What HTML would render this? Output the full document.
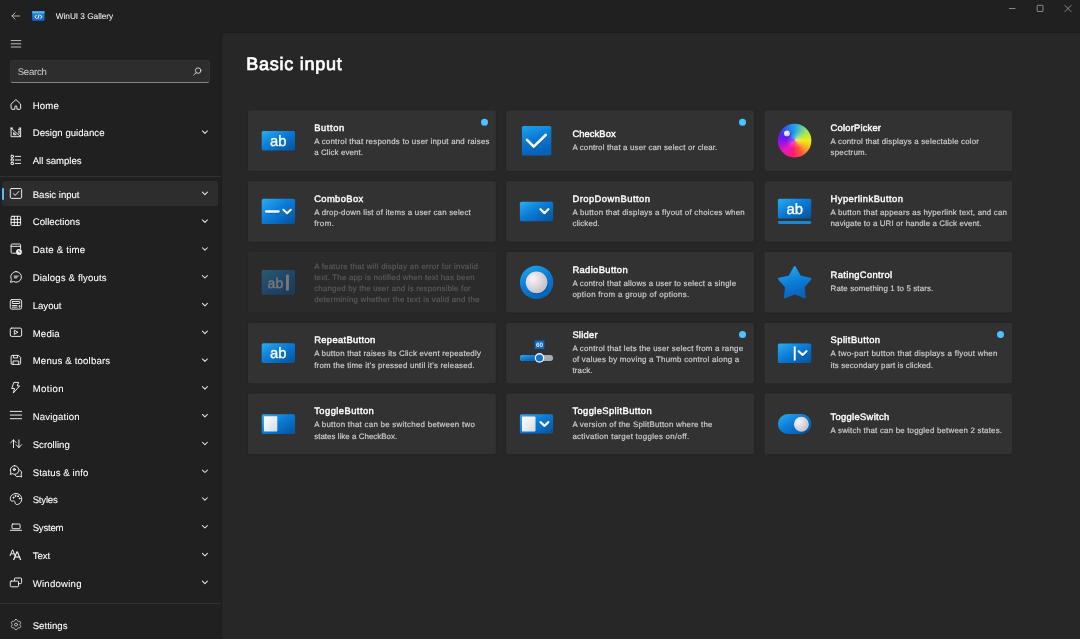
<!DOCTYPE html>
<html lang="en"><head><meta charset="utf-8"><title>WinUI 3 Gallery</title>
<style>
*{box-sizing:border-box;margin:0;padding:0}
html,body{width:1080px;height:639px;overflow:hidden;background:#202020}
body{font-family:"Liberation Sans",sans-serif;color:#fff}
#app{position:absolute;left:0;top:0;width:1080px;height:639px;overflow:hidden;background:#202020;will-change:transform;text-rendering:geometricPrecision}
.abs{position:absolute}
#content{position:absolute;left:221px;top:32px;width:870px;height:620px;background:#272727;border-radius:5px 0 0 0;border:1px solid #1c1c1c}
#apptitle{position:absolute;left:55.8px;top:10.00px;height:12px;line-height:12px;font-size:8.3px;white-space:nowrap;color:#fff}
#search{position:absolute;left:10px;top:60px;width:200px;height:23px;background:#2d2d2d;border-radius:3px;border:1px solid #323232;border-bottom:1px solid #848484}
#stext{position:absolute;left:6.7px;top:5.00px;height:14px;line-height:14px;font-size:9.6px;color:#cfcfcf;white-space:nowrap}
.sep{position:absolute;left:0;width:221px;height:1px;background:#313131}
#sel{position:absolute;left:2px;top:181px;width:216px;height:25px;border-radius:3px;background:#2d2d2d}
#selbar{position:absolute;left:2px;top:188px;width:2.4px;height:12px;border-radius:1px;background:#4cc2ff}
.nav{position:absolute;left:32.7px;height:14px;line-height:14px;font-size:9.6px;white-space:nowrap;color:#fff;-webkit-text-stroke:0.08px #fff}
.nico{position:absolute;left:9px;width:14px;height:14px}
.chev{position:absolute;left:200.2px;width:8px;height:8px}
#h1{position:absolute;left:246.2px;top:50.00px;height:28px;line-height:28px;font-size:18.0px;-webkit-text-stroke:0.7px #fff;white-space:nowrap;color:#fff}
#cardbg,#icons{position:absolute;left:0;top:0;width:1080px;height:639px}
.card{position:absolute;width:248px;height:61px}
.ct{position:absolute;left:66.3px;height:13px;line-height:13px;font-size:9.4px;-webkit-text-stroke:0.4px #fff;white-space:nowrap;color:#fff}
.cd{position:absolute;left:66.3px;height:11px;line-height:11px;font-size:7.9px;white-space:nowrap;color:#d2d2d2;-webkit-text-stroke:0.15px #d2d2d2}
.dis .cd{color:#5b5b5b;-webkit-text-stroke:0.15px #5b5b5b}
.dis .ct{color:#5b5b5b;-webkit-text-stroke:0.4px #5b5b5b}
.clip{position:absolute;left:0;top:6px;width:248px;height:6px;overflow:hidden}
.dot{position:absolute;left:233px;top:8.4px;width:7px;height:7px;border-radius:50%;background:#4cc2ff}
.wheel{position:absolute;left:13.8px;top:13.5px;width:33.6px;height:33.6px;border-radius:50%;background:radial-gradient(circle at 50% 50%,rgba(255,255,255,.28) 0,rgba(255,255,255,0) 45%),conic-gradient(from 0deg,#1ea6ea 0deg,#5fc8b0 30deg,#a8e458 55deg,#ecf018 90deg,#fda626 125deg,#fc5a3c 150deg,#fb1f6c 185deg,#e81ac0 225deg,#9a12e6 262deg,#5a1ef0 290deg,#2f62ee 325deg,#1ea6ea 360deg)}
.wknob{position:absolute;left:20px;top:20.3px;width:6px;height:6px;border-radius:50%;background:radial-gradient(circle at 35% 35%,#fbf8fb,#c4c0c8);box-shadow:0.6px 0.8px 1.2px rgba(20,0,90,.45)}
.cico{position:absolute;left:0;top:0;width:62px;height:60.5px;overflow:visible}
</style></head>
<body><div id="app">
<!-- title bar -->
<svg class="abs" style="left:10px;top:10px;width:12px;height:12px" viewBox="0 0 12 12" fill="none" stroke="#c4c4c4" stroke-width="0.85" stroke-linecap="round" stroke-linejoin="round"><path d="M9.6 6 H2 M5.1 2.8 L1.9 6 L5.1 9.2"/></svg>
<svg class="abs" style="left:32.2px;top:11px;width:13px;height:10px" viewBox="0 0 13 10"><defs><linearGradient id="lg0" x1="0" y1="0" x2="0" y2="1"><stop offset="0" stop-color="#2b8de0"/><stop offset="1" stop-color="#1565c8"/></linearGradient></defs><rect x="0.2" y="0.3" width="12.3" height="9.4" rx="0.7" fill="url(#lg0)"/><rect x="0.2" y="0.3" width="12.3" height="1.9" fill="#52b7f2"/><path d="M4.5 4 L2.9 5.8 L4.5 7.6 M8.3 4 L9.9 5.8 L8.3 7.6 M7.1 3.6 L5.8 8" stroke="#fff" stroke-width="0.95" fill="none"/></svg>
<div id="apptitle"><span style="letter-spacing:-0.053px">WinUI 3 Gallery</span></div>
<svg class="abs" style="left:1006px;top:2px;width:70px;height:13px" viewBox="0 0 70 13" fill="none" stroke="#b4b4b4" stroke-width="0.7"><path d="M3 6.5 H9.5"/><rect x="31.2" y="3.3" width="5.8" height="6.2" rx="0.5"/><path d="M58.7 3.2 L65.3 9.8 M65.3 3.2 L58.7 9.8"/></svg>
<!-- hamburger -->
<svg class="abs" style="left:10px;top:38px;width:12px;height:12px" viewBox="0 0 12 12" fill="none" stroke="#e6e6e6" stroke-width="0.8" stroke-linecap="round"><path d="M1.2 2.6 H10.8 M1.2 5.8 H10.8 M1.2 9 H10.8"/></svg>
<!-- search -->
<div id="search"><div id="stext"><span style="letter-spacing:-0.268px">Search</span></div>
<svg class="abs" style="left:181px;top:5px;width:11px;height:11px" viewBox="0 0 11 11" fill="none" stroke="#d4d4d4" stroke-width="0.95" stroke-linecap="round"><circle cx="6.15" cy="4.6" r="2.75"/><path d="M4.2 6.6 L1.9 8.8"/></svg>
</div>
<div class="sep" style="top:176px"></div>
<div class="sep" style="top:603px"></div>
<div id="sel"></div><div id="selbar"></div>
<div class="nav" style="top:100.00px"><span style="letter-spacing:0.189px">Home</span></div>
<div class="nav" style="top:127.00px"><span style="letter-spacing:0.024px">Design guidance</span></div>
<div class="nav" style="top:155.00px"><span style="letter-spacing:-0.019px">All samples</span></div>
<div class="nav" style="top:189.00px"><span style="letter-spacing:-0.008px">Basic input</span></div>
<div class="nav" style="top:216.00px"><span style="letter-spacing:0.038px">Collections</span></div>
<div class="nav" style="top:244.00px"><span style="letter-spacing:0.225px">Date &amp; time</span></div>
<div class="nav" style="top:272.00px"><span style="letter-spacing:0.156px">Dialogs &amp; flyouts</span></div>
<div class="nav" style="top:300.00px"><span style="letter-spacing:0.006px">Layout</span></div>
<div class="nav" style="top:328.00px"><span style="letter-spacing:0.192px">Media</span></div>
<div class="nav" style="top:355.00px"><span style="letter-spacing:0.184px">Menus &amp; toolbars</span></div>
<div class="nav" style="top:383.00px"><span style="letter-spacing:0.426px">Motion</span></div>
<div class="nav" style="top:411.00px"><span style="letter-spacing:0.176px">Navigation</span></div>
<div class="nav" style="top:439.00px"><span style="letter-spacing:0.034px">Scrolling</span></div>
<div class="nav" style="top:467.00px"><span style="letter-spacing:0.111px">Status &amp; info</span></div>
<div class="nav" style="top:494.00px"><span style="letter-spacing:-0.215px">Styles</span></div>
<div class="nav" style="top:522.00px"><span style="letter-spacing:-0.233px">System</span></div>
<div class="nav" style="top:550.00px"><span style="letter-spacing:-0.065px">Text</span></div>
<div class="nav" style="top:578.00px"><span style="letter-spacing:0.240px">Windowing</span></div>
<div class="nav" style="top:620.00px"><span style="letter-spacing:0.022px">Settings</span></div>
<!-- content -->
<div id="content"></div>
<div id="h1"><span style="letter-spacing:0.749px">Basic input</span></div>
<svg id="cardbg" viewBox="0 0 1080 639"><rect x="247.4" y="109.8" width="249.0" height="61.7" rx="2.8" fill="#323232" stroke="#242424" stroke-width="1"/><rect x="505.6" y="109.8" width="249.0" height="61.7" rx="2.8" fill="#323232" stroke="#242424" stroke-width="1"/><rect x="763.8" y="109.8" width="249.0" height="61.7" rx="2.8" fill="#323232" stroke="#242424" stroke-width="1"/><rect x="247.4" y="180.6" width="249.0" height="61.7" rx="2.8" fill="#323232" stroke="#242424" stroke-width="1"/><rect x="505.6" y="180.6" width="249.0" height="61.7" rx="2.8" fill="#323232" stroke="#242424" stroke-width="1"/><rect x="763.8" y="180.6" width="249.0" height="61.7" rx="2.8" fill="#323232" stroke="#242424" stroke-width="1"/><rect x="247.4" y="251.4" width="249.0" height="61.7" rx="2.8" fill="#2b2b2b" stroke="#262626" stroke-width="1"/><rect x="505.6" y="251.4" width="249.0" height="61.7" rx="2.8" fill="#323232" stroke="#242424" stroke-width="1"/><rect x="763.8" y="251.4" width="249.0" height="61.7" rx="2.8" fill="#323232" stroke="#242424" stroke-width="1"/><rect x="247.4" y="322.2" width="249.0" height="61.7" rx="2.8" fill="#323232" stroke="#242424" stroke-width="1"/><rect x="505.6" y="322.2" width="249.0" height="61.7" rx="2.8" fill="#323232" stroke="#242424" stroke-width="1"/><rect x="763.8" y="322.2" width="249.0" height="61.7" rx="2.8" fill="#323232" stroke="#242424" stroke-width="1"/><rect x="247.4" y="393.0" width="249.0" height="61.7" rx="2.8" fill="#323232" stroke="#242424" stroke-width="1"/><rect x="505.6" y="393.0" width="249.0" height="61.7" rx="2.8" fill="#323232" stroke="#242424" stroke-width="1"/><rect x="763.8" y="393.0" width="249.0" height="61.7" rx="2.8" fill="#323232" stroke="#242424" stroke-width="1"/></svg>
<div class="card" style="left:247px;top:110px">
<div class="ct" style="left:67.20px;top:11px"><span style="letter-spacing:0.582px">Button</span></div>
<div class="cd" style="left:67.20px;top:26px"><span style="letter-spacing:0.222px">A control that responds to user input and raises</span></div>
<div class="cd" style="left:67.20px;top:37px"><span style="letter-spacing:0.105px">a Click event.</span></div>
</div>
<div class="card" style="left:506px;top:110px">
<div class="ct" style="left:66.40px;top:17px"><span style="letter-spacing:0.077px">CheckBox</span></div>
<div class="cd" style="left:66.40px;top:32px"><span style="letter-spacing:0.165px">A control that a user can select or clear.</span></div>
</div>
<div class="card" style="left:764px;top:110px">
<div class="ct" style="left:66.60px;top:11px"><span style="letter-spacing:0.195px">ColorPicker</span></div>
<div class="cd" style="left:66.60px;top:26px"><span style="letter-spacing:0.196px">A control that displays a selectable color</span></div>
<div class="cd" style="left:66.60px;top:37px"><span style="letter-spacing:0.216px">spectrum.</span></div>
</div>
<div class="card" style="left:247px;top:181px">
<div class="ct" style="left:67.20px;top:11px"><span style="letter-spacing:0.370px">ComboBox</span></div>
<div class="cd" style="left:67.20px;top:26px"><span style="letter-spacing:0.210px">A drop-down list of items a user can select</span></div>
<div class="cd" style="left:67.20px;top:37px"><span style="letter-spacing:0.423px">from.</span></div>
</div>
<div class="card" style="left:506px;top:181px">
<div class="ct" style="left:66.40px;top:11px"><span style="letter-spacing:0.478px">DropDownButton</span></div>
<div class="cd" style="left:66.40px;top:26px"><span style="letter-spacing:0.238px">A button that displays a flyout of choices when</span></div>
<div class="cd" style="left:66.40px;top:37px"><span style="letter-spacing:0.130px">clicked.</span></div>
</div>
<div class="card" style="left:764px;top:181px">
<div class="ct" style="left:66.60px;top:11px"><span style="letter-spacing:0.444px">HyperlinkButton</span></div>
<div class="cd" style="left:66.60px;top:26px"><span style="letter-spacing:0.206px">A button that appears as hyperlink text, and can</span></div>
<div class="cd" style="left:66.60px;top:37px"><span style="letter-spacing:0.130px">navigate to a URI or handle a Click event.</span></div>
</div>
<div class="card dis" style="left:247px;top:251px">
<div class="clip"><div class="ct" style="left:67.20px;top:-12px"><span>InputValidation</span></div></div>
<div class="cd" style="left:67.20px;top:10px"><span style="letter-spacing:0.234px">A feature that will display an error for invalid</span></div>
<div class="cd" style="left:67.20px;top:21px"><span style="letter-spacing:0.194px">text. The app is notified when text has been</span></div>
<div class="cd" style="left:67.20px;top:32px"><span style="letter-spacing:0.188px">changed by the user and is responsible for</span></div>
<div class="cd" style="left:67.20px;top:43px"><span style="letter-spacing:0.249px">determining whether the text is valid and the</span></div>
</div>
<div class="card" style="left:506px;top:251px">
<div class="ct" style="left:66.40px;top:12px"><span style="letter-spacing:0.363px">RadioButton</span></div>
<div class="cd" style="left:66.40px;top:27px"><span style="letter-spacing:0.183px">A control that allows a user to select a single</span></div>
<div class="cd" style="left:66.40px;top:38px"><span style="letter-spacing:0.325px">option from a group of options.</span></div>
</div>
<div class="card" style="left:764px;top:251px">
<div class="ct" style="left:66.60px;top:17px"><span style="letter-spacing:0.348px">RatingControl</span></div>
<div class="cd" style="left:66.60px;top:32px"><span style="letter-spacing:0.149px">Rate something 1 to 5 stars.</span></div>
</div>
<div class="card" style="left:247px;top:322px">
<div class="ct" style="left:67.20px;top:11px"><span style="letter-spacing:0.334px">RepeatButton</span></div>
<div class="cd" style="left:67.20px;top:26px"><span style="letter-spacing:0.200px">A button that raises its Click event repeatedly</span></div>
<div class="cd" style="left:67.20px;top:38px"><span style="letter-spacing:0.208px">from the time it's pressed until it's released.</span></div>
</div>
<div class="card" style="left:506px;top:322px">
<div class="ct" style="left:66.40px;top:6px"><span style="letter-spacing:0.230px">Slider</span></div>
<div class="cd" style="left:66.40px;top:21px"><span style="letter-spacing:0.206px">A control that lets the user select from a range</span></div>
<div class="cd" style="left:66.40px;top:32px"><span style="letter-spacing:0.237px">of values by moving a Thumb control along a</span></div>
<div class="cd" style="left:66.40px;top:43px"><span style="letter-spacing:0.176px">track.</span></div>
</div>
<div class="card" style="left:764px;top:322px">
<div class="ct" style="left:66.60px;top:11px"><span style="letter-spacing:0.410px">SplitButton</span></div>
<div class="cd" style="left:66.60px;top:26px"><span style="letter-spacing:0.282px">A two-part button that displays a flyout when</span></div>
<div class="cd" style="left:66.60px;top:38px"><span style="letter-spacing:0.131px">its secondary part is clicked.</span></div>
</div>
<div class="card" style="left:247px;top:393px">
<div class="ct" style="left:67.20px;top:11px"><span style="letter-spacing:0.447px">ToggleButton</span></div>
<div class="cd" style="left:67.20px;top:26px"><span style="letter-spacing:0.275px">A button that can be switched between two</span></div>
<div class="cd" style="left:67.20px;top:38px"><span style="letter-spacing:0.047px">states like a CheckBox.</span></div>
</div>
<div class="card" style="left:506px;top:393px">
<div class="ct" style="left:66.40px;top:11px"><span style="letter-spacing:0.390px">ToggleSplitButton</span></div>
<div class="cd" style="left:66.40px;top:26px"><span style="letter-spacing:0.230px">A version of the SplitButton where the</span></div>
<div class="cd" style="left:66.40px;top:38px"><span style="letter-spacing:0.296px">activation target toggles on/off.</span></div>
</div>
<div class="card" style="left:764px;top:393px">
<div class="ct" style="left:66.60px;top:17px"><span style="letter-spacing:0.300px">ToggleSwitch</span></div>
<div class="cd" style="left:66.60px;top:32px"><span style="letter-spacing:0.202px">A switch that can be toggled between 2 states.</span></div>
</div>
<svg id="icons" viewBox="0 0 1080 639"><g transform="translate(9 98.00)" fill="none" stroke="#fff" stroke-width="0.9" stroke-linecap="round" stroke-linejoin="round"><path d="M2.2 6 L6.9 1.6 L11.6 6 V10.6 a0.7 0.7 0 0 1 -0.7 0.7 H7.9 V8.8 a1 1 0 0 0 -2 0 V11.3 H2.9 a0.7 0.7 0 0 1 -0.7 -0.7 Z"/></g><g transform="translate(9 125.80)" fill="none" stroke="#fff" stroke-width="0.9" stroke-linecap="round" stroke-linejoin="round"><path d="M2.1 2.3 V10.9 H11.6 V2.3 M2.1 2.3 L11.6 10.9 M4.6 7 V9 H6.9 Z M9.4 3.6 h1.2 M9.4 5.4 h1.2 M9.4 7.2 h1.2" /><path d="M2.1 2.3 h1.5 M10.1 2.3 h1.5"/></g><path transform="translate(200.9 128.10)" d="M1.5 2.85 L4 5.3 L6.5 2.85" fill="none" stroke="#e4e4e4" stroke-width="1.05" stroke-linecap="round" stroke-linejoin="round"/><g transform="translate(9 153.60)" fill="none" stroke="#fff" stroke-width="0.9" stroke-linecap="round" stroke-linejoin="round"><rect x="2.1" y="1.75" width="2.4" height="2.1" rx="0.3"/><rect x="2.1" y="5.35" width="2.4" height="2.1" rx="0.3"/><rect x="2.1" y="8.8" width="2.4" height="2.1" rx="0.3"/><path d="M6.3 2.8 H11.6 M6.3 6.4 H11.6 M6.3 9.85 H11.6"/></g><g transform="translate(9 187.00)" fill="none" stroke="#fff" stroke-width="0.9" stroke-linecap="round" stroke-linejoin="round"><rect x="1.3" y="1.5" width="11.3" height="9.9" rx="1.2"/><path d="M4.3 6.6 L6.1 8.4 L9.9 4.4"/></g><path transform="translate(200.9 189.30)" d="M1.5 2.85 L4 5.3 L6.5 2.85" fill="none" stroke="#e4e4e4" stroke-width="1.05" stroke-linecap="round" stroke-linejoin="round"/><g transform="translate(9 214.80)" fill="none" stroke="#fff" stroke-width="0.9" stroke-linecap="round" stroke-linejoin="round"><rect x="2.1" y="1.5" width="9.5" height="9.2" rx="1"/><path d="M5.3 1.5 V10.7 M8.4 1.5 V10.7 M2.1 4.6 H11.6 M2.1 7.6 H11.6"/></g><path transform="translate(200.9 217.10)" d="M1.5 2.85 L4 5.3 L6.5 2.85" fill="none" stroke="#e4e4e4" stroke-width="1.05" stroke-linecap="round" stroke-linejoin="round"/><g transform="translate(9 242.60)" fill="none" stroke="#fff" stroke-width="0.9" stroke-linecap="round" stroke-linejoin="round"><path d="M7 10.6 H3.3 a1.2 1.2 0 0 1 -1.2 -1.2 V2.6 a1.2 1.2 0 0 1 1.2 -1.2 H10.4 a1.2 1.2 0 0 1 1.2 1.2 V6.2 M2.1 3.7 H11.6"/><circle cx="10" cy="9.3" r="2.85" fill="#fff" stroke="none"/><path d="M9.9 7.9 V9.5 H11.1" stroke="#202020" stroke-width="0.75"/></g><path transform="translate(200.9 244.90)" d="M1.5 2.85 L4 5.3 L6.5 2.85" fill="none" stroke="#e4e4e4" stroke-width="1.05" stroke-linecap="round" stroke-linejoin="round"/><g transform="translate(9 270.40)" fill="none" stroke="#fff" stroke-width="0.9" stroke-linecap="round" stroke-linejoin="round"><path transform="translate(0 0.4)" d="M7.1 0.8 a5.3 5.3 0 1 1 -2.6 9.9 L1.5 11.5 L2.4 8.6 A5.3 5.3 0 0 1 7.1 0.8 Z M5.2 5.3 H9.3 M5.2 7 H7.9"/></g><path transform="translate(200.9 272.70)" d="M1.5 2.85 L4 5.3 L6.5 2.85" fill="none" stroke="#e4e4e4" stroke-width="1.05" stroke-linecap="round" stroke-linejoin="round"/><g transform="translate(9 298.20)" fill="none" stroke="#fff" stroke-width="0.9" stroke-linecap="round" stroke-linejoin="round"><rect x="1.3" y="1.4" width="11.3" height="9.5" rx="1.5"/><rect x="3.3" y="3.3" width="7.4" height="2" rx="0.3"/><path d="M3.3 7.3 H8 M3.3 9 H8 M10.1 7.8 v1.2 h0.8 v-1.2z"/></g><path transform="translate(200.9 300.50)" d="M1.5 2.85 L4 5.3 L6.5 2.85" fill="none" stroke="#e4e4e4" stroke-width="1.05" stroke-linecap="round" stroke-linejoin="round"/><g transform="translate(9 326.00)" fill="none" stroke="#fff" stroke-width="0.9" stroke-linecap="round" stroke-linejoin="round"><rect x="1.3" y="2.1" width="11.3" height="8.3" rx="1.4"/><path d="M5.7 4.4 L9 6.25 L5.7 8.1 Z"/></g><path transform="translate(200.9 328.30)" d="M1.5 2.85 L4 5.3 L6.5 2.85" fill="none" stroke="#e4e4e4" stroke-width="1.05" stroke-linecap="round" stroke-linejoin="round"/><g transform="translate(9 353.80)" fill="none" stroke="#fff" stroke-width="0.9" stroke-linecap="round" stroke-linejoin="round"><path d="M2.1 2.6 a1 1 0 0 1 1 -1 H9.5 L11.6 3.7 V9.6 a1 1 0 0 1 -1 1 H3.1 a1 1 0 0 1 -1 -1 Z M4.4 1.6 V4.1 H8.6 V1.6 M4 10.6 V7.2 H9.7 V10.6"/></g><path transform="translate(200.9 356.10)" d="M1.5 2.85 L4 5.3 L6.5 2.85" fill="none" stroke="#e4e4e4" stroke-width="1.05" stroke-linecap="round" stroke-linejoin="round"/><g transform="translate(9 381.50)" fill="none" stroke="#fff" stroke-width="0.9" stroke-linecap="round" stroke-linejoin="round"><path d="M5.3 0.9 H9.6 L8.2 4.4 H10.7 L4.3 11.5 L5.6 7 H3.1 Z"/></g><path transform="translate(200.9 383.80)" d="M1.5 2.85 L4 5.3 L6.5 2.85" fill="none" stroke="#e4e4e4" stroke-width="1.05" stroke-linecap="round" stroke-linejoin="round"/><g transform="translate(9 409.30)" fill="none" stroke="#fff" stroke-width="0.9" stroke-linecap="round" stroke-linejoin="round"><path d="M1.3 2.1 H12.6 M1.3 5.75 H12.6 M1.3 9.4 H12.6"/></g><path transform="translate(200.9 411.60)" d="M1.5 2.85 L4 5.3 L6.5 2.85" fill="none" stroke="#e4e4e4" stroke-width="1.05" stroke-linecap="round" stroke-linejoin="round"/><g transform="translate(9 437.10)" fill="none" stroke="#fff" stroke-width="0.9" stroke-linecap="round" stroke-linejoin="round"><path d="M4.5 2.8 V10.5 M1.6 5.7 L4.5 2.8 L7.3 5.7 M9.9 2.8 V10.5 M7.1 7.6 L9.9 10.5 L12.6 7.6"/></g><path transform="translate(200.9 439.40)" d="M1.5 2.85 L4 5.3 L6.5 2.85" fill="none" stroke="#e4e4e4" stroke-width="1.05" stroke-linecap="round" stroke-linejoin="round"/><g transform="translate(9 464.90)" fill="none" stroke="#fff" stroke-width="0.9" stroke-linecap="round" stroke-linejoin="round"><path d="M5.6 0.8 a4.3 4.3 0 1 1 -2.2 8 L1.2 9.5 L1.9 7.2 A4.3 4.3 0 0 1 5.6 0.8 Z"/><path d="M10.75 4.9 A3.7 3.7 0 0 1 12.1 10 L12.7 12.1 L10.6 11.4 A3.7 3.7 0 0 1 5.7 9.95"/><circle cx="5.3" cy="4.6" r="1.1" fill="#fff" fill-opacity="0.55"/></g><path transform="translate(200.9 467.20)" d="M1.5 2.85 L4 5.3 L6.5 2.85" fill="none" stroke="#e4e4e4" stroke-width="1.05" stroke-linecap="round" stroke-linejoin="round"/><g transform="translate(9 492.60)" fill="none" stroke="#fff" stroke-width="0.9" stroke-linecap="round" stroke-linejoin="round"><path d="M7 0.9 C3.6 0.9 1.3 3.4 1.3 6.2 C1.3 8.1 2.6 8.9 3.9 8.5 C5.1 8.1 6 8.6 6 9.8 C6 11.3 7.1 12.2 8.5 11.9 C11 11.4 12.7 9.2 12.7 6.5 C12.7 3.3 10.2 0.9 7 0.9 Z"/><circle cx="4.4" cy="5.1" r="0.5" fill="#fff"/><circle cx="6.4" cy="3.3" r="0.5" fill="#fff"/><circle cx="9" cy="3.6" r="0.5" fill="#fff"/><circle cx="10.6" cy="5.8" r="0.5" fill="#fff"/></g><path transform="translate(200.9 494.90)" d="M1.5 2.85 L4 5.3 L6.5 2.85" fill="none" stroke="#e4e4e4" stroke-width="1.05" stroke-linecap="round" stroke-linejoin="round"/><g transform="translate(9 520.40)" fill="none" stroke="#fff" stroke-width="0.9" stroke-linecap="round" stroke-linejoin="round"><rect x="3" y="3.6" width="8.1" height="4.7" rx="0.8"/><path d="M1.3 9.9 H12.6"/></g><path transform="translate(200.9 522.70)" d="M1.5 2.85 L4 5.3 L6.5 2.85" fill="none" stroke="#e4e4e4" stroke-width="1.05" stroke-linecap="round" stroke-linejoin="round"/><g transform="translate(9 548.20)" fill="none" stroke="#fff" stroke-width="0.9" stroke-linecap="round" stroke-linejoin="round"><text x="0.6" y="7.5" font-family="Liberation Sans, sans-serif" font-size="9.2" fill="#fff" stroke="none">A</text><text x="4.0" y="12" font-family="Liberation Sans, sans-serif" font-size="12.4" fill="#fff" stroke="none">A</text></g><path transform="translate(200.9 550.50)" d="M1.5 2.85 L4 5.3 L6.5 2.85" fill="none" stroke="#e4e4e4" stroke-width="1.05" stroke-linecap="round" stroke-linejoin="round"/><g transform="translate(9 576.00)" fill="none" stroke="#fff" stroke-width="0.9" stroke-linecap="round" stroke-linejoin="round"><path d="M5.4 4.7 V3 a1 1 0 0 1 1 -1 H11.6 a1 1 0 0 1 1 1 V6.6 a1 1 0 0 1 -1 1 H9.9"/><rect x="1.3" y="5.1" width="8.2" height="5.7" rx="1"/></g><path transform="translate(200.9 578.30)" d="M1.5 2.85 L4 5.3 L6.5 2.85" fill="none" stroke="#e4e4e4" stroke-width="1.05" stroke-linecap="round" stroke-linejoin="round"/><g transform="translate(9 618.20)" fill="none" stroke="#d6d6d6" stroke-width="0.9" stroke-linecap="round" stroke-linejoin="round"><path d="M7.05 1.30 L7.49 1.32 L7.92 1.49 L8.23 2.01 L8.46 2.54 L8.74 2.77 L9.05 2.94 L9.34 3.12 L9.69 3.25 L10.27 3.18 L10.87 3.19 L11.23 3.47 L11.47 3.85 L11.67 4.24 L11.74 4.69 L11.44 5.22 L11.10 5.69 L11.03 6.05 L11.05 6.40 L11.03 6.75 L11.10 7.11 L11.44 7.58 L11.74 8.11 L11.67 8.56 L11.47 8.95 L11.23 9.33 L10.87 9.61 L10.27 9.62 L9.69 9.55 L9.34 9.68 L9.05 9.86 L8.74 10.03 L8.46 10.26 L8.23 10.79 L7.92 11.31 L7.49 11.48 L7.05 11.50 L6.61 11.48 L6.18 11.31 L5.87 10.79 L5.64 10.26 L5.36 10.03 L5.05 9.86 L4.76 9.68 L4.41 9.55 L3.83 9.62 L3.23 9.61 L2.87 9.33 L2.63 8.95 L2.43 8.56 L2.36 8.11 L2.66 7.58 L3.00 7.11 L3.07 6.75 L3.05 6.40 L3.07 6.05 L3.00 5.69 L2.66 5.22 L2.36 4.69 L2.43 4.24 L2.63 3.85 L2.87 3.47 L3.23 3.19 L3.83 3.18 L4.41 3.25 L4.76 3.12 L5.05 2.94 L5.36 2.77 L5.64 2.54 L5.87 2.01 L6.18 1.49 L6.61 1.32Z"/><circle cx="7.05" cy="6.4" r="1.5"/></g><g transform="translate(248 110.5)"><defs><linearGradient id="gb" x1="0" y1="0" x2="1" y2="1"><stop offset="0" stop-color="#2cadec"/><stop offset="0.45" stop-color="#0b7cd8"/><stop offset="1" stop-color="#04529e"/></linearGradient><linearGradient id="wb" x1="0" y1="0" x2="1" y2="1"><stop offset="0" stop-color="#ffffff"/><stop offset="1" stop-color="#d6dade"/></linearGradient><radialGradient id="kb" cx="0.33" cy="0.33" r="0.8"><stop offset="0" stop-color="#f8f4f8"/><stop offset="1" stop-color="#bdb9c2"/></radialGradient></defs><rect x="13.7" y="20.5" width="33.3" height="19.6" rx="1.6" fill="url(#gb)"/><text x="30.2" y="35.6" font-family="Liberation Sans, sans-serif" text-anchor="middle" stroke="#fff" stroke-width="0.35" font-size="14.8" fill="#fff">ab</text></g><circle cx="484.50" cy="122.25" r="3.5" fill="#4cc2ff"/><g transform="translate(506 110.5)"><defs><linearGradient id="gc" x1="0" y1="0" x2="1" y2="1"><stop offset="0" stop-color="#2cadec"/><stop offset="0.45" stop-color="#0b7cd8"/><stop offset="1" stop-color="#04529e"/></linearGradient><linearGradient id="wc" x1="0" y1="0" x2="1" y2="1"><stop offset="0" stop-color="#ffffff"/><stop offset="1" stop-color="#d6dade"/></linearGradient><radialGradient id="kc" cx="0.33" cy="0.33" r="0.8"><stop offset="0" stop-color="#f8f4f8"/><stop offset="1" stop-color="#bdb9c2"/></radialGradient></defs><defs><linearGradient id="gcv" x1="0" y1="0" x2="0.3" y2="1"><stop offset="0" stop-color="#1fa3ea"/><stop offset="0.5" stop-color="#0b7ad6"/><stop offset="1" stop-color="#0562b6"/></linearGradient></defs><rect x="15.9" y="15.4" width="29.4" height="29.7" rx="1.6" fill="url(#gcv)"/><path d="M21.8 30.4 L28.4 37 L40.4 25.4" fill="none" stroke="#003a78" stroke-opacity="0.3" stroke-width="2.7" stroke-linecap="round" stroke-linejoin="round"/><path d="M21 29.4 L27.75 36.1 L39.75 24.5" fill="none" stroke="#fbfbfd" stroke-width="2.7" stroke-linecap="round" stroke-linejoin="round"/></g><circle cx="742.50" cy="122.25" r="3.5" fill="#4cc2ff"/><g transform="translate(764 110.5)"><defs><clipPath id="wclip"><circle cx="30.6" cy="30.1" r="16.8"/></clipPath><radialGradient id="wglow"><stop offset="0" stop-color="#fff" stop-opacity="0.3"/><stop offset="0.5" stop-color="#fff" stop-opacity="0"/></radialGradient><radialGradient id="wk" cx="0.35" cy="0.35" r="0.8"><stop offset="0" stop-color="#fbf8fb"/><stop offset="1" stop-color="#bdb9c4"/></radialGradient></defs><g><circle cx="30.6" cy="30.1" r="16.8" fill="#1ea6ea"/><path d="M30.6 30.1 L30.60 12.10 L34.03 12.43Z" fill="#21a8e7"/><path d="M30.6 30.1 L31.54 12.12 L34.95 12.63Z" fill="#28abe1"/><path d="M30.6 30.1 L32.48 12.20 L35.86 12.89Z" fill="#2eaedc"/><path d="M30.6 30.1 L33.42 12.32 L36.76 13.19Z" fill="#35b2d6"/><path d="M30.6 30.1 L34.34 12.49 L37.63 13.53Z" fill="#3bb5d0"/><path d="M30.6 30.1 L35.26 12.71 L38.49 13.92Z" fill="#42b9ca"/><path d="M30.6 30.1 L36.16 12.98 L39.33 14.36Z" fill="#48bcc4"/><path d="M30.6 30.1 L37.05 13.30 L40.14 14.84Z" fill="#4fc0be"/><path d="M30.6 30.1 L37.92 13.66 L40.92 15.36Z" fill="#55c3b9"/><path d="M30.6 30.1 L38.77 14.06 L41.68 15.92Z" fill="#5cc6b3"/><path d="M30.6 30.1 L39.60 14.51 L42.41 16.52Z" fill="#63caab"/><path d="M30.6 30.1 L40.40 15.00 L43.10 17.15Z" fill="#6ccda0"/><path d="M30.6 30.1 L41.18 15.54 L43.76 17.82Z" fill="#75d096"/><path d="M30.6 30.1 L41.93 16.11 L44.39 18.53Z" fill="#7ed48b"/><path d="M30.6 30.1 L42.64 16.72 L44.98 19.27Z" fill="#86d780"/><path d="M30.6 30.1 L43.33 17.37 L45.52 20.03Z" fill="#8fda76"/><path d="M30.6 30.1 L43.98 18.06 L46.03 20.83Z" fill="#98de6b"/><path d="M30.6 30.1 L44.59 18.77 L46.49 21.65Z" fill="#a1e161"/><path d="M30.6 30.1 L45.16 19.52 L46.91 22.49Z" fill="#a9e457"/><path d="M30.6 30.1 L45.70 20.30 L47.29 23.36Z" fill="#afe552"/><path d="M30.6 30.1 L46.19 21.10 L47.62 24.24Z" fill="#b5e64c"/><path d="M30.6 30.1 L46.64 21.93 L47.90 25.14Z" fill="#bae747"/><path d="M30.6 30.1 L47.04 22.78 L48.14 26.05Z" fill="#c0e841"/><path d="M30.6 30.1 L47.40 23.65 L48.33 26.97Z" fill="#c6e93c"/><path d="M30.6 30.1 L47.72 24.54 L48.47 27.91Z" fill="#ccea36"/><path d="M30.6 30.1 L47.99 25.44 L48.56 28.84Z" fill="#d2eb31"/><path d="M30.6 30.1 L48.21 26.36 L48.60 29.79Z" fill="#d8ec2b"/><path d="M30.6 30.1 L48.38 27.28 L48.59 30.73Z" fill="#dded26"/><path d="M30.6 30.1 L48.50 28.22 L48.53 31.67Z" fill="#e3ee20"/><path d="M30.6 30.1 L48.58 29.16 L48.42 32.61Z" fill="#e9ef1b"/><path d="M30.6 30.1 L48.60 30.10 L48.27 33.53Z" fill="#eded19"/><path d="M30.6 30.1 L48.58 31.04 L48.07 34.45Z" fill="#eee61a"/><path d="M30.6 30.1 L48.50 31.98 L47.81 35.36Z" fill="#f0e01b"/><path d="M30.6 30.1 L48.38 32.92 L47.51 36.26Z" fill="#f1da1c"/><path d="M30.6 30.1 L48.21 33.84 L47.17 37.13Z" fill="#f3d31d"/><path d="M30.6 30.1 L47.99 34.76 L46.78 37.99Z" fill="#f4cd1f"/><path d="M30.6 30.1 L47.72 35.66 L46.34 38.83Z" fill="#f5c720"/><path d="M30.6 30.1 L47.40 36.55 L45.86 39.64Z" fill="#f7c021"/><path d="M30.6 30.1 L47.04 37.42 L45.34 40.42Z" fill="#f8ba22"/><path d="M30.6 30.1 L46.64 38.27 L44.78 41.18Z" fill="#fab423"/><path d="M30.6 30.1 L46.19 39.10 L44.18 41.91Z" fill="#fbad25"/><path d="M30.6 30.1 L45.70 39.90 L43.55 42.60Z" fill="#fda726"/><path d="M30.6 30.1 L45.16 40.68 L42.88 43.26Z" fill="#fd9e28"/><path d="M30.6 30.1 L44.59 41.43 L42.17 43.89Z" fill="#fd952b"/><path d="M30.6 30.1 L43.98 42.14 L41.43 44.48Z" fill="#fd8c2d"/><path d="M30.6 30.1 L43.33 42.83 L40.67 45.02Z" fill="#fd8330"/><path d="M30.6 30.1 L42.64 43.48 L39.87 45.53Z" fill="#fc7a33"/><path d="M30.6 30.1 L41.93 44.09 L39.05 45.99Z" fill="#fc7135"/><path d="M30.6 30.1 L41.18 44.66 L38.21 46.41Z" fill="#fc6838"/><path d="M30.6 30.1 L40.40 45.20 L37.34 46.79Z" fill="#fc5f3b"/><path d="M30.6 30.1 L39.60 45.69 L36.46 47.12Z" fill="#fc573e"/><path d="M30.6 30.1 L38.77 46.14 L35.56 47.40Z" fill="#fc5242"/><path d="M30.6 30.1 L37.92 46.54 L34.65 47.64Z" fill="#fc4d46"/><path d="M30.6 30.1 L37.05 46.90 L33.73 47.83Z" fill="#fc484a"/><path d="M30.6 30.1 L36.16 47.22 L32.79 47.97Z" fill="#fc434f"/><path d="M30.6 30.1 L35.26 47.49 L31.86 48.06Z" fill="#fc3e53"/><path d="M30.6 30.1 L34.34 47.71 L30.91 48.10Z" fill="#fb3957"/><path d="M30.6 30.1 L33.42 47.88 L29.97 48.09Z" fill="#fb345b"/><path d="M30.6 30.1 L32.48 48.00 L29.03 48.03Z" fill="#fb2f5f"/><path d="M30.6 30.1 L31.54 48.08 L28.09 47.92Z" fill="#fb2a63"/><path d="M30.6 30.1 L30.60 48.10 L27.17 47.77Z" fill="#fb2567"/><path d="M30.6 30.1 L29.66 48.08 L26.25 47.57Z" fill="#fb206b"/><path d="M30.6 30.1 L28.72 48.00 L25.34 47.31Z" fill="#fa1f71"/><path d="M30.6 30.1 L27.78 47.88 L24.44 47.01Z" fill="#f81e78"/><path d="M30.6 30.1 L26.86 47.71 L23.57 46.67Z" fill="#f71e7e"/><path d="M30.6 30.1 L25.94 47.49 L22.71 46.28Z" fill="#f61e84"/><path d="M30.6 30.1 L25.04 47.22 L21.87 45.84Z" fill="#f41d8a"/><path d="M30.6 30.1 L24.15 46.90 L21.06 45.36Z" fill="#f31d91"/><path d="M30.6 30.1 L23.28 46.54 L20.28 44.84Z" fill="#f11c97"/><path d="M30.6 30.1 L22.43 46.14 L19.52 44.28Z" fill="#f01c9d"/><path d="M30.6 30.1 L21.60 45.69 L18.79 43.68Z" fill="#ee1ca4"/><path d="M30.6 30.1 L20.80 45.20 L18.10 43.05Z" fill="#ed1baa"/><path d="M30.6 30.1 L20.02 44.66 L17.44 42.38Z" fill="#ec1bb0"/><path d="M30.6 30.1 L19.27 44.09 L16.81 41.67Z" fill="#ea1bb7"/><path d="M30.6 30.1 L18.56 43.48 L16.22 40.93Z" fill="#e91abd"/><path d="M30.6 30.1 L17.87 42.83 L15.68 40.17Z" fill="#e51ac2"/><path d="M30.6 30.1 L17.22 42.14 L15.17 39.37Z" fill="#df19c5"/><path d="M30.6 30.1 L16.61 41.43 L14.71 38.55Z" fill="#d818c8"/><path d="M30.6 30.1 L16.04 40.68 L14.29 37.71Z" fill="#d218cb"/><path d="M30.6 30.1 L15.50 39.90 L13.91 36.84Z" fill="#cc17ce"/><path d="M30.6 30.1 L15.01 39.10 L13.58 35.96Z" fill="#c516d1"/><path d="M30.6 30.1 L14.56 38.27 L13.30 35.06Z" fill="#bf16d4"/><path d="M30.6 30.1 L14.16 37.42 L13.06 34.15Z" fill="#b915d7"/><path d="M30.6 30.1 L13.80 36.55 L12.87 33.23Z" fill="#b214da"/><path d="M30.6 30.1 L13.48 35.66 L12.73 32.29Z" fill="#ac14dd"/><path d="M30.6 30.1 L13.21 34.76 L12.64 31.36Z" fill="#a613e0"/><path d="M30.6 30.1 L12.99 33.84 L12.60 30.41Z" fill="#9f13e3"/><path d="M30.6 30.1 L12.82 32.92 L12.61 29.47Z" fill="#9912e6"/><path d="M30.6 30.1 L12.70 31.98 L12.67 28.53Z" fill="#9214e7"/><path d="M30.6 30.1 L12.62 31.04 L12.78 27.59Z" fill="#8b15e8"/><path d="M30.6 30.1 L12.60 30.10 L12.93 26.67Z" fill="#8416e9"/><path d="M30.6 30.1 L12.62 29.16 L13.13 25.75Z" fill="#7d17ea"/><path d="M30.6 30.1 L12.70 28.22 L13.39 24.84Z" fill="#7719ec"/><path d="M30.6 30.1 L12.82 27.28 L13.69 23.94Z" fill="#701aed"/><path d="M30.6 30.1 L12.99 26.36 L14.03 23.07Z" fill="#691bee"/><path d="M30.6 30.1 L13.21 25.44 L14.42 22.21Z" fill="#621cef"/><path d="M30.6 30.1 L13.48 24.54 L14.86 21.37Z" fill="#5b1ef0"/><path d="M30.6 30.1 L13.80 23.65 L15.34 20.56Z" fill="#5723f0"/><path d="M30.6 30.1 L14.16 22.78 L15.86 19.78Z" fill="#5329f0"/><path d="M30.6 30.1 L14.56 21.93 L16.42 19.02Z" fill="#502ff0"/><path d="M30.6 30.1 L15.01 21.10 L17.02 18.29Z" fill="#4c34ef"/><path d="M30.6 30.1 L15.50 20.30 L17.65 17.60Z" fill="#483aef"/><path d="M30.6 30.1 L16.04 19.52 L18.32 16.94Z" fill="#4440ef"/><path d="M30.6 30.1 L16.61 18.77 L19.03 16.31Z" fill="#4146ef"/><path d="M30.6 30.1 L17.22 18.06 L19.77 15.72Z" fill="#3d4cef"/><path d="M30.6 30.1 L17.87 17.37 L20.53 15.18Z" fill="#3951ee"/><path d="M30.6 30.1 L18.56 16.72 L21.33 14.67Z" fill="#3657ee"/><path d="M30.6 30.1 L19.27 16.11 L22.15 14.21Z" fill="#325dee"/><path d="M30.6 30.1 L20.02 15.54 L22.99 13.79Z" fill="#2f63ee"/><path d="M30.6 30.1 L20.80 15.00 L23.86 13.41Z" fill="#2d69ee"/><path d="M30.6 30.1 L21.60 14.51 L24.74 13.08Z" fill="#2c6fed"/><path d="M30.6 30.1 L22.43 14.06 L25.64 12.80Z" fill="#2a74ed"/><path d="M30.6 30.1 L23.28 13.66 L26.55 12.56Z" fill="#297aed"/><path d="M30.6 30.1 L24.15 13.30 L27.47 12.37Z" fill="#2780ec"/><path d="M30.6 30.1 L25.04 12.98 L28.41 12.23Z" fill="#2686ec"/><path d="M30.6 30.1 L25.94 12.71 L29.34 12.14Z" fill="#258cec"/><path d="M30.6 30.1 L26.86 12.49 L30.29 12.10Z" fill="#2392eb"/><path d="M30.6 30.1 L27.78 12.32 L30.60 12.10Z" fill="#2297eb"/><path d="M30.6 30.1 L28.72 12.20 L30.60 12.10Z" fill="#209deb"/><path d="M30.6 30.1 L29.66 12.12 L30.60 12.10Z" fill="#1fa3ea"/><circle cx="30.6" cy="30.1" r="16.8" fill="url(#wglow)"/><circle cx="30.6" cy="30.1" r="18.3" fill="none" stroke="#323232" stroke-width="3"/></g><circle cx="23.7" cy="24" r="3.1" fill="#14005a" fill-opacity="0.35"/><circle cx="23" cy="23.1" r="3" fill="url(#wk)"/></g><g transform="translate(248 181.25)"><defs><linearGradient id="gcb" x1="0" y1="0" x2="1" y2="1"><stop offset="0" stop-color="#2cadec"/><stop offset="0.45" stop-color="#0b7cd8"/><stop offset="1" stop-color="#04529e"/></linearGradient><linearGradient id="wcb" x1="0" y1="0" x2="1" y2="1"><stop offset="0" stop-color="#ffffff"/><stop offset="1" stop-color="#d6dade"/></linearGradient><radialGradient id="kcb" cx="0.33" cy="0.33" r="0.8"><stop offset="0" stop-color="#f8f4f8"/><stop offset="1" stop-color="#bdb9c2"/></radialGradient></defs><rect x="13.7" y="17.55" width="33.4" height="25.2" rx="1.6" fill="url(#gcb)"/><path d="M18.7 31.1 H31.6" stroke="#003a78" stroke-opacity="0.3" stroke-width="2.3" stroke-linecap="round"/><path d="M18.1 30.25 H30.6" stroke="#fbfbfd" stroke-width="2.3" stroke-linecap="round"/><path d="M36.0 29.4 L39.7 33.0 L43.4 29.4" fill="none" stroke="#003a78" stroke-opacity="0.35" stroke-width="2.1" stroke-linecap="round" stroke-linejoin="round"/><path d="M35.4 28.5 L39.1 32.1 L42.8 28.5" fill="none" stroke="#fbfbfd" stroke-width="2.1" stroke-linecap="round" stroke-linejoin="round"/></g><g transform="translate(506 181.25)"><defs><linearGradient id="gdd" x1="0" y1="0" x2="1" y2="1"><stop offset="0" stop-color="#2cadec"/><stop offset="0.45" stop-color="#0b7cd8"/><stop offset="1" stop-color="#04529e"/></linearGradient><linearGradient id="wdd" x1="0" y1="0" x2="1" y2="1"><stop offset="0" stop-color="#ffffff"/><stop offset="1" stop-color="#d6dade"/></linearGradient><radialGradient id="kdd" cx="0.33" cy="0.33" r="0.8"><stop offset="0" stop-color="#f8f4f8"/><stop offset="1" stop-color="#bdb9c2"/></radialGradient></defs><rect x="13.9" y="20.5" width="33.2" height="19.4" rx="1.6" fill="url(#gdd)"/><path d="M35.1 28.9 L39.050000000000004 32.8 L43.0 28.9" fill="none" stroke="#003a78" stroke-opacity="0.35" stroke-width="2.3" stroke-linecap="round" stroke-linejoin="round"/><path d="M34.5 28 L38.45 31.9 L42.4 28" fill="none" stroke="#fbfbfd" stroke-width="2.3" stroke-linecap="round" stroke-linejoin="round"/></g><g transform="translate(764 181.25)"><defs><linearGradient id="gh" x1="0" y1="0" x2="1" y2="1"><stop offset="0" stop-color="#2cadec"/><stop offset="0.45" stop-color="#0b7cd8"/><stop offset="1" stop-color="#04529e"/></linearGradient><linearGradient id="wh" x1="0" y1="0" x2="1" y2="1"><stop offset="0" stop-color="#ffffff"/><stop offset="1" stop-color="#d6dade"/></linearGradient><radialGradient id="kh" cx="0.33" cy="0.33" r="0.8"><stop offset="0" stop-color="#f8f4f8"/><stop offset="1" stop-color="#bdb9c2"/></radialGradient></defs><rect x="13.9" y="17.55" width="33.35" height="19.8" rx="1.6" fill="url(#gh)"/><rect x="13.9" y="39.75" width="33.35" height="3" rx="1.4" fill="#1389dc"/><text x="30.65" y="33" font-family="Liberation Sans, sans-serif" text-anchor="middle" stroke="#fff" stroke-width="0.35" font-size="14.8" fill="#fff">ab</text></g><g transform="translate(248 252)" opacity="0.36"><defs><linearGradient id="giv" x1="0" y1="0" x2="1" y2="1"><stop offset="0" stop-color="#2cadec"/><stop offset="0.45" stop-color="#0b7cd8"/><stop offset="1" stop-color="#04529e"/></linearGradient><linearGradient id="wiv" x1="0" y1="0" x2="1" y2="1"><stop offset="0" stop-color="#ffffff"/><stop offset="1" stop-color="#d6dade"/></linearGradient><radialGradient id="kiv" cx="0.33" cy="0.33" r="0.8"><stop offset="0" stop-color="#f8f4f8"/><stop offset="1" stop-color="#bdb9c2"/></radialGradient></defs><rect x="13.7" y="18" width="33.3" height="24.8" rx="1.6" fill="url(#giv)"/><text x="27.4" y="35.75" font-family="Liberation Sans, sans-serif" text-anchor="middle" stroke="#fff" stroke-width="0.35" font-size="14" fill="#fff">ab</text><rect x="38" y="22.5" width="2.9" height="16.3" rx="1.2" fill="#fff"/></g><g transform="translate(506 252)"><defs><linearGradient id="gr" x1="0" y1="0" x2="1" y2="1"><stop offset="0" stop-color="#2cadec"/><stop offset="0.45" stop-color="#0b7cd8"/><stop offset="1" stop-color="#04529e"/></linearGradient><linearGradient id="wr" x1="0" y1="0" x2="1" y2="1"><stop offset="0" stop-color="#ffffff"/><stop offset="1" stop-color="#d6dade"/></linearGradient><radialGradient id="kr" cx="0.33" cy="0.33" r="0.8"><stop offset="0" stop-color="#f8f4f8"/><stop offset="1" stop-color="#bdb9c2"/></radialGradient></defs><defs><linearGradient id="grv" x1="0.2" y1="0" x2="0.7" y2="1"><stop offset="0" stop-color="#1fa3ea"/><stop offset="0.5" stop-color="#0b7ad6"/><stop offset="1" stop-color="#0562b6"/></linearGradient></defs><circle cx="30.6" cy="30.4" r="16.7" fill="url(#grv)"/><circle cx="31.6" cy="31.6" r="10.9" fill="#003a78" fill-opacity="0.3"/><circle cx="30.6" cy="30.35" r="10.9" fill="url(#kr)"/></g><g transform="translate(764 252)"><defs><linearGradient id="gst" x1="0.3" y1="0" x2="0.6" y2="1"><stop offset="0" stop-color="#21a4ea"/><stop offset="0.55" stop-color="#0b7ad6"/><stop offset="1" stop-color="#0862b4"/></linearGradient></defs><path d="M30.75 15.2 L35.8 24.6 L46.2 26.9 L39.3 35 L40.5 45.2 L30.75 41.2 L21.1 45.2 L22.3 35 L15.2 26.9 L25.7 24.6 Z" fill="url(#gst)" stroke="url(#gst)" stroke-width="2.4" stroke-linejoin="round"/></g><g transform="translate(248 322.75)"><defs><linearGradient id="gb2" x1="0" y1="0" x2="1" y2="1"><stop offset="0" stop-color="#2cadec"/><stop offset="0.45" stop-color="#0b7cd8"/><stop offset="1" stop-color="#04529e"/></linearGradient><linearGradient id="wb2" x1="0" y1="0" x2="1" y2="1"><stop offset="0" stop-color="#ffffff"/><stop offset="1" stop-color="#d6dade"/></linearGradient><radialGradient id="kb2" cx="0.33" cy="0.33" r="0.8"><stop offset="0" stop-color="#f8f4f8"/><stop offset="1" stop-color="#bdb9c2"/></radialGradient></defs><rect x="13.7" y="20.6" width="33.3" height="19.6" rx="1.6" fill="url(#gb2)"/><text x="30.2" y="35.7" font-family="Liberation Sans, sans-serif" text-anchor="middle" stroke="#fff" stroke-width="0.35" font-size="14.8" fill="#fff">ab</text></g><g transform="translate(506 322.75)"><defs><linearGradient id="gs" x1="0" y1="0" x2="1" y2="1"><stop offset="0" stop-color="#2cadec"/><stop offset="0.45" stop-color="#0b7cd8"/><stop offset="1" stop-color="#04529e"/></linearGradient><linearGradient id="ws" x1="0" y1="0" x2="1" y2="1"><stop offset="0" stop-color="#ffffff"/><stop offset="1" stop-color="#d6dade"/></linearGradient><radialGradient id="ks" cx="0.33" cy="0.33" r="0.8"><stop offset="0" stop-color="#f8f4f8"/><stop offset="1" stop-color="#bdb9c2"/></radialGradient></defs><rect x="13.9" y="32.15" width="33.2" height="6.1" rx="3.05" fill="#a4adb6"/><rect x="13.9" y="32.15" width="22" height="6.1" rx="3.05" fill="url(#gs)"/><circle cx="33.5" cy="35.15" r="4.8" fill="#f4f4f6"/><circle cx="33.5" cy="35.15" r="3.5" fill="#0b74d0"/><rect x="28.7" y="17.85" width="9.7" height="8.3" rx="0.5" fill="#0a6ac4"/><text x="33.55" y="24.2" font-family="Liberation Sans, sans-serif" text-anchor="middle" font-size="6.3" font-weight="bold" fill="#e4ecf8">60</text></g><circle cx="742.50" cy="334.50" r="3.5" fill="#4cc2ff"/><g transform="translate(764 322.75)"><defs><linearGradient id="gsp" x1="0" y1="0" x2="1" y2="1"><stop offset="0" stop-color="#2cadec"/><stop offset="0.45" stop-color="#0b7cd8"/><stop offset="1" stop-color="#04529e"/></linearGradient><linearGradient id="wsp" x1="0" y1="0" x2="1" y2="1"><stop offset="0" stop-color="#ffffff"/><stop offset="1" stop-color="#d6dade"/></linearGradient><radialGradient id="ksp" cx="0.33" cy="0.33" r="0.8"><stop offset="0" stop-color="#f8f4f8"/><stop offset="1" stop-color="#bdb9c2"/></radialGradient></defs><rect x="13.9" y="20.85" width="33.35" height="19.5" rx="1.6" fill="url(#gsp)"/><path d="M31.3 24.9 V38" stroke="#003a78" stroke-opacity="0.3" stroke-width="2" stroke-linecap="round"/><path d="M30.75 24.4 V37" stroke="#fbfbfd" stroke-width="2" stroke-linecap="round"/><path d="M35.300000000000004 29.4 L39.2 33.1 L43.1 29.4" fill="none" stroke="#003a78" stroke-opacity="0.35" stroke-width="2.2" stroke-linecap="round" stroke-linejoin="round"/><path d="M34.7 28.5 L38.6 32.2 L42.5 28.5" fill="none" stroke="#fbfbfd" stroke-width="2.2" stroke-linecap="round" stroke-linejoin="round"/></g><circle cx="1000.50" cy="334.50" r="3.5" fill="#4cc2ff"/><g transform="translate(248 393.5)"><defs><linearGradient id="gtb" x1="0" y1="0" x2="1" y2="1"><stop offset="0" stop-color="#2cadec"/><stop offset="0.45" stop-color="#0b7cd8"/><stop offset="1" stop-color="#04529e"/></linearGradient><linearGradient id="wtb" x1="0" y1="0" x2="1" y2="1"><stop offset="0" stop-color="#ffffff"/><stop offset="1" stop-color="#d6dade"/></linearGradient><radialGradient id="ktb" cx="0.33" cy="0.33" r="0.8"><stop offset="0" stop-color="#f8f4f8"/><stop offset="1" stop-color="#bdb9c2"/></radialGradient></defs><rect x="13.7" y="20.8" width="33.4" height="19.6" rx="1.6" fill="url(#gtb)"/><rect x="15.9" y="22.7" width="13.4" height="15.3" rx="0.8" fill="url(#wtb)"/></g><g transform="translate(506 393.5)"><defs><linearGradient id="gts" x1="0" y1="0" x2="1" y2="1"><stop offset="0" stop-color="#2cadec"/><stop offset="0.45" stop-color="#0b7cd8"/><stop offset="1" stop-color="#04529e"/></linearGradient><linearGradient id="wts" x1="0" y1="0" x2="1" y2="1"><stop offset="0" stop-color="#ffffff"/><stop offset="1" stop-color="#d6dade"/></linearGradient><radialGradient id="kts" cx="0.33" cy="0.33" r="0.8"><stop offset="0" stop-color="#f8f4f8"/><stop offset="1" stop-color="#bdb9c2"/></radialGradient></defs><rect x="13.9" y="20.8" width="33.2" height="19.2" rx="1.6" fill="url(#gts)"/><rect x="16" y="22.9" width="13.5" height="15.1" rx="0.8" fill="url(#wts)"/><path d="M35.1 29.5 L39.1 33.3 L43.0 29.5" fill="none" stroke="#003a78" stroke-opacity="0.35" stroke-width="2.2" stroke-linecap="round" stroke-linejoin="round"/><path d="M34.5 28.6 L38.5 32.4 L42.4 28.6" fill="none" stroke="#fbfbfd" stroke-width="2.2" stroke-linecap="round" stroke-linejoin="round"/></g><g transform="translate(764 393.5)"><defs><linearGradient id="gtw" x1="0" y1="0" x2="1" y2="1"><stop offset="0" stop-color="#2cadec"/><stop offset="0.45" stop-color="#0b7cd8"/><stop offset="1" stop-color="#04529e"/></linearGradient><linearGradient id="wtw" x1="0" y1="0" x2="1" y2="1"><stop offset="0" stop-color="#ffffff"/><stop offset="1" stop-color="#d6dade"/></linearGradient><radialGradient id="ktw" cx="0.33" cy="0.33" r="0.8"><stop offset="0" stop-color="#f8f4f8"/><stop offset="1" stop-color="#bdb9c2"/></radialGradient></defs><rect x="13.9" y="20.6" width="33.5" height="19.9" rx="9.95" fill="url(#gtw)"/><circle cx="38.2" cy="31.7" r="7.5" fill="#003a78" fill-opacity="0.3"/><circle cx="37.4" cy="30.8" r="7.5" fill="url(#ktw)"/></g></svg>
</div></body></html>
